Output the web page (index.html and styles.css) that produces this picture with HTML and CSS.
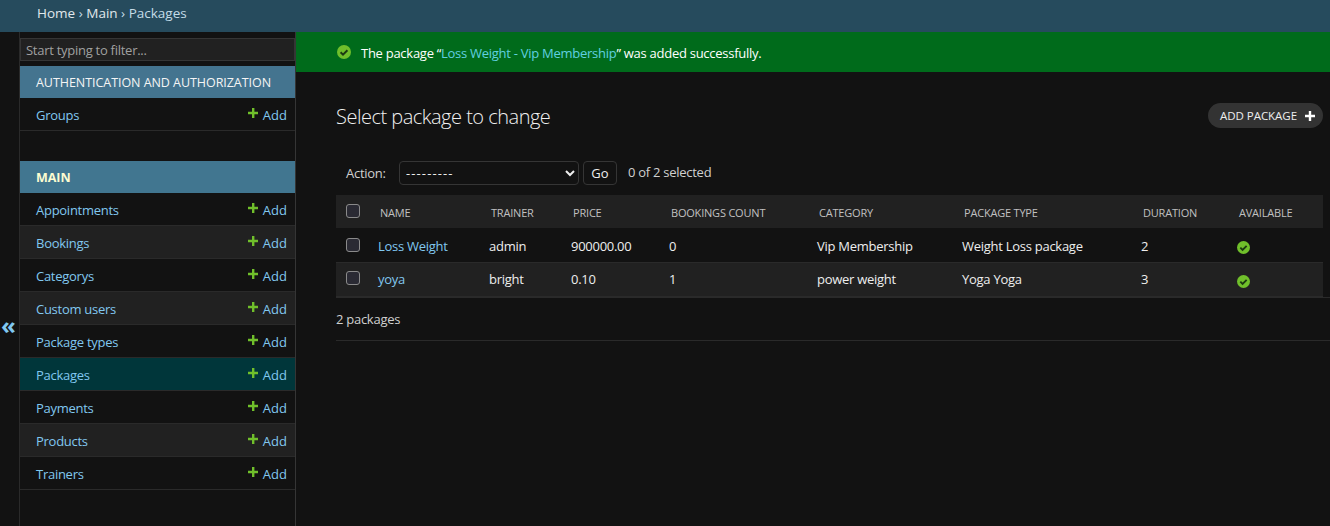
FILE: index.html
```html
<!DOCTYPE html>
<html>
<head>
<title>Select package to change</title>
<link rel="stylesheet" href="styles.css">
</head>
<body>
<div class="breadcrumbs"><a href="#">Home</a> › <a href="#">Main</a> › Packages</div>
<div class="layout">
  <div class="toggle-col"><span class="toggle">«</span></div>
  <nav class="sidebar">
    <input class="nav-filter" type="text" placeholder="Start typing to filter...">
    <div class="caption">AUTHENTICATION AND AUTHORIZATION</div>
    <div class="row"><a href="#">Groups</a><a class="add" href="#"><svg class="plus" viewBox="0 0 10 10"><path d="M4 0h2.400v3.800h3.600v2.400h-3.600v3.800h-2.400v-3.800h-4v-2.400h4z"/></svg>Add</a></div>
    <div class="caption main-caption">MAIN</div>
    <div class="row"><a href="#">Appointments</a><a class="add" href="#"><svg class="plus" viewBox="0 0 10 10"><path d="M4 0h2.400v3.800h3.600v2.400h-3.600v3.800h-2.400v-3.800h-4v-2.400h4z"/></svg>Add</a></div>
    <div class="row alt"><a href="#">Bookings</a><a class="add" href="#"><svg class="plus" viewBox="0 0 10 10"><path d="M4 0h2.400v3.800h3.600v2.400h-3.600v3.800h-2.400v-3.800h-4v-2.400h4z"/></svg>Add</a></div>
    <div class="row"><a href="#">Categorys</a><a class="add" href="#"><svg class="plus" viewBox="0 0 10 10"><path d="M4 0h2.400v3.800h3.600v2.400h-3.600v3.800h-2.400v-3.800h-4v-2.400h4z"/></svg>Add</a></div>
    <div class="row alt"><a href="#">Custom users</a><a class="add" href="#"><svg class="plus" viewBox="0 0 10 10"><path d="M4 0h2.400v3.800h3.600v2.400h-3.600v3.800h-2.400v-3.800h-4v-2.400h4z"/></svg>Add</a></div>
    <div class="row"><a href="#">Package types</a><a class="add" href="#"><svg class="plus" viewBox="0 0 10 10"><path d="M4 0h2.400v3.800h3.600v2.400h-3.600v3.800h-2.400v-3.800h-4v-2.400h4z"/></svg>Add</a></div>
    <div class="row current"><a href="#">Packages</a><a class="add" href="#"><svg class="plus" viewBox="0 0 10 10"><path d="M4 0h2.400v3.800h3.600v2.400h-3.600v3.800h-2.400v-3.800h-4v-2.400h4z"/></svg>Add</a></div>
    <div class="row"><a href="#">Payments</a><a class="add" href="#"><svg class="plus" viewBox="0 0 10 10"><path d="M4 0h2.400v3.800h3.600v2.400h-3.600v3.800h-2.400v-3.800h-4v-2.400h4z"/></svg>Add</a></div>
    <div class="row alt"><a href="#">Products</a><a class="add" href="#"><svg class="plus" viewBox="0 0 10 10"><path d="M4 0h2.400v3.800h3.600v2.400h-3.600v3.800h-2.400v-3.800h-4v-2.400h4z"/></svg>Add</a></div>
    <div class="row"><a href="#">Trainers</a><a class="add" href="#"><svg class="plus" viewBox="0 0 10 10"><path d="M4 0h2.400v3.800h3.600v2.400h-3.600v3.800h-2.400v-3.800h-4v-2.400h4z"/></svg>Add</a></div>
  </nav>
  <main class="main">
    <div class="message">
      <svg class="check msg-check" viewBox="0 0 14 14"><circle cx="7" cy="7" r="7"/><path class="tick" d="M3.600 7.200l2.400 2.400 4.400-4.400"/></svg>
      <span>The package “<a href="#">Loss Weight - Vip Membership</a>” was added successfully.</span>
    </div>
    <div class="content">
      <div class="title-row">
        <h1>Select package to change</h1>
        <a class="addlink" href="#">ADD PACKAGE<svg class="addlink-plus" viewBox="0 0 10 10"><path d="M3.800 0h2.400v3.800h3.800v2.400h-3.800v3.800h-2.400v-3.800h-3.800v-2.400h3.800z"/></svg></a>
      </div>
      <div class="actions">
        <label>Action:</label>
        <select class="action-select"><option>---------</option></select>
        <button class="go">Go</button>
        <span class="counter">0 of 2 selected</span>
      </div>
      <table class="results">
        <thead>
          <tr>
            <th class="c-box"><input type="checkbox"></th>
            <th class="c-name">NAME</th>
            <th class="c-trainer">TRAINER</th>
            <th class="c-price">PRICE</th>
            <th class="c-count">BOOKINGS COUNT</th>
            <th class="c-cat">CATEGORY</th>
            <th class="c-type">PACKAGE TYPE</th>
            <th class="c-dur">DURATION</th>
            <th>AVAILABLE</th>
          </tr>
        </thead>
        <tbody>
          <tr>
            <td><input type="checkbox"></td>
            <td><a href="#">Loss Weight</a></td>
            <td>admin</td>
            <td>900000.00</td>
            <td>0</td>
            <td>Vip Membership</td>
            <td>Weight Loss package</td>
            <td>2</td>
            <td><svg class="check" viewBox="0 0 14 14"><circle cx="7" cy="7" r="7"/><path class="tick" d="M3.600 7.200l2.400 2.400 4.400-4.400"/></svg></td>
          </tr>
          <tr class="alt">
            <td><input type="checkbox"></td>
            <td><a href="#">yoya</a></td>
            <td>bright</td>
            <td>0.10</td>
            <td>1</td>
            <td>power weight</td>
            <td>Yoga Yoga</td>
            <td>3</td>
            <td><svg class="check" viewBox="0 0 14 14"><circle cx="7" cy="7" r="7"/><path class="tick" d="M3.600 7.200l2.400 2.400 4.400-4.400"/></svg></td>
          </tr>
        </tbody>
      </table>
      <p class="paginator">2 packages</p>
    </div>
  </main>
</div>
</body>
</html>
```

FILE: styles.css
```css
html, body {
  height: 100%;
}
body {
  margin: 0;
  background-color: #121212;
  color: #eeeeee;
  font-family: "Open Sans", "Noto Sans", sans-serif;
  font-size: 13px;
  letter-spacing: -0.27px;
  overflow: hidden;
}
a {
  color: #81c8f0;
  text-decoration: none;
}
.breadcrumbs {
  height: 32px;
  box-sizing: border-box;
  padding: 4px 0 0 37px;
  background-color: #264b5d;
  color: #c4dce8;
  font-size: 13.500px;
  letter-spacing: 0;
  line-height: 19px;
}
.breadcrumbs a {
  color: #e0e8ec;
}
.layout {
  display: flex;
  height: 494px;
}
.toggle-col {
  width: 20px;
  padding-top: 281px;
  box-sizing: border-box;
}
.toggle {
  display: block;
  color: #81c8f0;
  font-size: 24px;
  font-weight: 700;
  line-height: 24px;
  margin-left: 1px;
}
.sidebar {
  width: 275px;
  box-sizing: content-box;
  border-left: 1px solid #2a2a2a;
  border-right: 1px solid #353535;
  margin-left: -1px;
}
.nav-filter {
  display: block;
  width: 100%;
  height: 23px;
  box-sizing: border-box;
  margin: 6px 0 5px;
  padding: 0 5px;
  background-color: #212121;
  border: 1px solid #353535;
  color: #eeeeee;
  font: inherit;
  letter-spacing: -0.27px;
}
.nav-filter::placeholder {
  color: #a0a0a0;
  opacity: 1;
}
.caption {
  height: 32px;
  line-height: 34px;
  padding-left: 16px;
  background-color: #44748f;
  color: #f5f5f5;
  font-size: 12.500px;
  letter-spacing: -0.05px;
}
.main-caption {
  margin-top: 30px;
  background-color: #417690;
  color: #fcfcd0;
  font-weight: 700;
}
.row {
  height: 33px;
  box-sizing: border-box;
  display: flex;
  justify-content: space-between;
  align-items: center;
  padding: 2px 8px 0 16px;
  border-bottom: 1px solid #2a2a2a;
}
.row.alt {
  background-color: #212121;
}
.row.current {
  background-color: #00363a;
}
.add {
  display: flex;
  align-items: center;
  letter-spacing: 0;
}
.plus {
  width: 10px;
  height: 10px;
  margin: -5px 5px 0 0;
  fill: #70bf2b;
}
.main {
  flex: 1;
  min-width: 0;
}
.message {
  height: 40px;
  display: flex;
  align-items: center;
  padding: 2px 0 0 41px;
  box-sizing: border-box;
  background-color: #006b1b;
  color: #ffffff;
}
.message a {
  color: #60d0e0;
}
.check {
  width: 13px;
  height: 13px;
  display: block;
  margin-top: 2px;
}
.check circle {
  fill: #70bf2b;
}
.check .tick {
  fill: none;
  stroke: #1c3a12;
  stroke-width: 2;
}
.msg-check {
  width: 14px;
  height: 14px;
  margin: -3px 10px 0 0;
}
.content {
  padding: 31px 0 0 40px;
}
.title-row {
  display: flex;
  justify-content: space-between;
  align-items: flex-start;
  padding-right: 7px;
}
h1 {
  margin: 0;
  font-size: 20px;
  font-weight: 300;
  letter-spacing: -0.5px;
  line-height: 28px;
  color: #f0f0f0;
}
.addlink {
  height: 25px;
  display: flex;
  align-items: center;
  box-sizing: border-box;
  padding: 0 8px 0 12px;
  border-radius: 15px;
  background-color: #333333;
  color: #eeeeee;
  font-size: 11.500px;
  letter-spacing: -0.05px;
}
.addlink-plus {
  width: 10px;
  height: 10px;
  margin-left: 8px;
  fill: #ffffff;
}
.actions {
  display: flex;
  align-items: center;
  height: 24px;
  margin-top: 30px;
  padding-left: 10px;
}
.actions label {
  width: 53px;
  color: #d0d0d0;
}
.action-select {
  width: 180px;
  height: 24px;
  padding: 0 2px;
  background-color: #121212;
  border: 1px solid #353535;
  border-radius: 4px;
  color: #eeeeee;
  font: inherit;
  letter-spacing: 1.100px;
}
.go {
  width: 34px;
  height: 24px;
  margin-left: 4px;
  padding: 0;
  background-color: #121212;
  border: 1px solid #353535;
  border-radius: 4px;
  color: #eeeeee;
  font: inherit;
}
.counter {
  margin: -3px 0 0 11px;
  color: #d0d0d0;
}
.results {
  width: 987px;
  margin-top: 10px;
  border-collapse: collapse;
  table-layout: fixed;
}
.results th {
  box-sizing: border-box;
  height: 33px;
  padding: 2px 0 0 2px;
  background-color: #212121;
  border-bottom: 1px solid #121212;
  color: #c0c0c0;
  font-size: 11px;
  font-weight: 400;
  letter-spacing: -0.2px;
  text-align: left;
}
.results th.c-box {
  padding: 0;
}
.results th.c-box input {
  margin-top: 0;
}
.results td {
  box-sizing: border-box;
  height: 34px;
  padding: 2px 0 0;
  border-bottom: 1px solid #2a2a2a;
}
.results tr.alt td {
  padding: 0 0 1px;
  background-color: #212121;
}
.results tr.alt .check {
  margin-top: 6px;
}
.results input {
  display: block;
  width: 14px;
  height: 14px;
  margin: -2px 0 0 10px;
  appearance: none;
  background-color: #2a2a33;
  border: 1px solid #8a8a8a;
  border-radius: 3px;
}
.c-box { width: 42px; }
.c-name { width: 111px; }
.c-trainer { width: 82px; }
.c-price { width: 98px; }
.c-count { width: 148px; }
.c-cat { width: 145px; }
.c-type { width: 179px; }
.c-dur { width: 96px; }
.paginator {
  height: 44px;
  box-sizing: border-box;
  margin: 0;
  padding-top: 12px;
  border-top: 1px solid #2a2a2a;
  border-bottom: 1px solid #2a2a2a;
  color: #d0d0d0;
}
```
